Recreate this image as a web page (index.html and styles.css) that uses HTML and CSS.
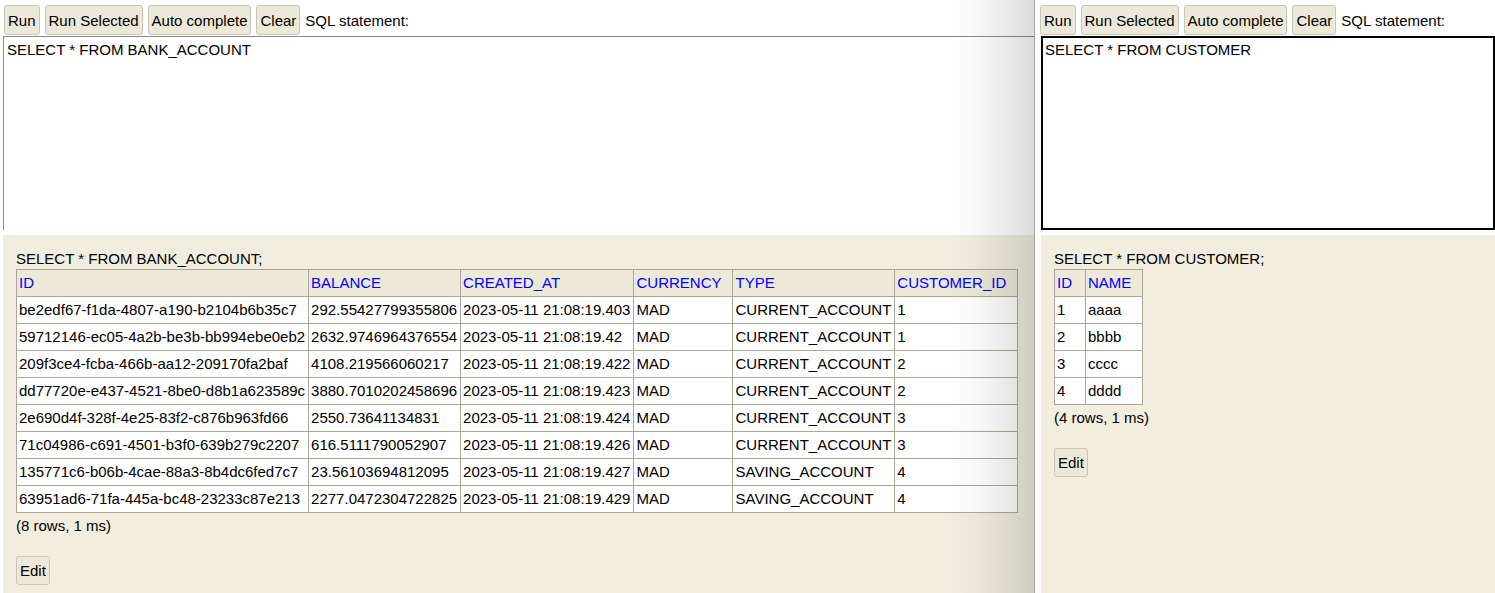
FILE: index.html
```html
<!DOCTYPE html>
<html>
<head>
<meta charset="utf-8">
<link rel="stylesheet" href="styles.css">
</head>
<body>
<div class="app">
  <div class="panel panel-left">
    <div class="toolbar">
      <button class="btn">Run</button>
      <button class="btn">Run Selected</button>
      <button class="btn">Auto complete</button>
      <button class="btn">Clear</button>
      <span class="label">SQL statement:</span>
    </div>
    <textarea class="sql sql-left">SELECT * FROM BANK_ACCOUNT</textarea>
    <div class="results">
      <div class="query">SELECT * FROM BANK_ACCOUNT;</div>
      <table class="result-set">
        <tr><th>ID</th><th>BALANCE</th><th>CREATED_AT</th><th>CURRENCY</th><th>TYPE</th><th>CUSTOMER_ID</th></tr>
        <tr><td>be2edf67-f1da-4807-a190-b2104b6b35c7</td><td>292.55427799355806</td><td>2023-05-11 21:08:19.403</td><td>MAD</td><td>CURRENT_ACCOUNT</td><td>1</td></tr>
        <tr><td>59712146-ec05-4a2b-be3b-bb994ebe0eb2</td><td>2632.9746964376554</td><td>2023-05-11 21:08:19.42</td><td>MAD</td><td>CURRENT_ACCOUNT</td><td>1</td></tr>
        <tr><td>209f3ce4-fcba-466b-aa12-209170fa2baf</td><td>4108.219566060217</td><td>2023-05-11 21:08:19.422</td><td>MAD</td><td>CURRENT_ACCOUNT</td><td>2</td></tr>
        <tr><td>dd77720e-e437-4521-8be0-d8b1a623589c</td><td>3880.7010202458696</td><td>2023-05-11 21:08:19.423</td><td>MAD</td><td>CURRENT_ACCOUNT</td><td>2</td></tr>
        <tr><td>2e690d4f-328f-4e25-83f2-c876b963fd66</td><td>2550.73641134831</td><td>2023-05-11 21:08:19.424</td><td>MAD</td><td>CURRENT_ACCOUNT</td><td>3</td></tr>
        <tr><td>71c04986-c691-4501-b3f0-639b279c2207</td><td>616.5111790052907</td><td>2023-05-11 21:08:19.426</td><td>MAD</td><td>CURRENT_ACCOUNT</td><td>3</td></tr>
        <tr><td>135771c6-b06b-4cae-88a3-8b4dc6fed7c7</td><td>23.56103694812095</td><td>2023-05-11 21:08:19.427</td><td>MAD</td><td>SAVING_ACCOUNT</td><td>4</td></tr>
        <tr><td>63951ad6-71fa-445a-bc48-23233c87e213</td><td>2277.0472304722825</td><td>2023-05-11 21:08:19.429</td><td>MAD</td><td>SAVING_ACCOUNT</td><td>4</td></tr>
      </table>
      <div class="summary">(8 rows, 1 ms)</div>
      <button class="btn btn-edit">Edit</button>
    </div>
    <div class="shade"></div>
  </div>
  <div class="divider"></div>
  <div class="panel panel-right">
    <div class="toolbar">
      <button class="btn">Run</button>
      <button class="btn">Run Selected</button>
      <button class="btn">Auto complete</button>
      <button class="btn">Clear</button>
      <span class="label">SQL statement:</span>
    </div>
    <textarea class="sql sql-right">SELECT * FROM CUSTOMER</textarea>
    <div class="results">
      <div class="query">SELECT * FROM CUSTOMER;</div>
      <table class="result-set">
        <tr><th class="col-id">ID</th><th>NAME</th></tr>
        <tr><td>1</td><td>aaaa</td></tr>
        <tr><td>2</td><td>bbbb</td></tr>
        <tr><td>3</td><td>cccc</td></tr>
        <tr><td>4</td><td>dddd</td></tr>
      </table>
      <div class="summary">(4 rows, 1 ms)</div>
      <button class="btn btn-edit">Edit</button>
    </div>
  </div>
</div>
</body>
</html>
```

FILE: styles.css
```css
* {
  box-sizing: border-box;
}

html, body {
  margin: 0;
  padding: 0;
  background: #ffffff;
}

body {
  font-family: "Liberation Sans", Arial, sans-serif;
  font-size: 15px;
  line-height: 17px;
  color: #000000;
}

.app {
  display: flex;
  height: 593px;
  overflow: hidden;
}

.panel {
  display: flex;
  flex-direction: column;
  overflow: hidden;
  background: #ffffff;
}

.panel-left {
  position: relative;
  width: 1035px;
  flex: 0 0 1035px;
  padding-left: 3px;
  border-right: 1px solid #a3a3a3;
}

.divider {
  flex: 0 0 3px;
  background: #ffffff;
}

.panel-right {
  flex: 1 1 auto;
  padding-left: 3px;
}

.toolbar {
  display: flex;
  align-items: center;
  gap: 5px;
  height: 36px;
  padding-top: 5px;
  padding-bottom: 1px;
  padding-left: 1px;
  white-space: nowrap;
}

.panel-right .toolbar {
  padding-left: 0;
  margin-left: -1px;
}

.btn {
  font-family: "Liberation Sans", Arial, sans-serif;
  font-size: 15px;
  line-height: 17px;
  height: 30px;
  padding: 0 3px;
  margin: 0;
  color: #000000;
  background: #ece9d8;
  border: 1px solid #c9c6b8;
  border-radius: 3px;
}

.sql {
  display: block;
  font-family: "Liberation Sans", Arial, sans-serif;
  font-size: 15px;
  line-height: 17px;
  color: #000000;
  resize: none;
  outline: none;
  background: #ffffff;
  height: 194px;
  flex: 0 0 194px;
  margin: 0;
}

.sql-left {
  width: 1100px;
  padding: 4px 0 0 3px;
  border: none;
  border-top: 1px solid #8a8a8a;
  border-left: 1px solid #8a8a8a;
}

.sql-right {
  width: 100%;
  padding: 3px 0 0 2px;
  border: 2px solid #000000;
}

.results {
  margin-top: 5px;
  flex: 1 1 auto;
  background: #f1eee0;
  padding: 15px 13px 0 13px;
}

.query {
  margin-bottom: 2px;
}

.result-set {
  border-collapse: collapse;
}

.result-set th,
.result-set td {
  border: 1px solid #aca899;
  padding: 4px 3px 5px 2px;
  text-align: left;
  white-space: nowrap;
  font-weight: normal;
}

.result-set th {
  background: #ece9d8;
  color: #0000ff;
  padding-right: 11px;
}

.result-set th.col-id {
  padding-right: 13px;
}

.result-set td {
  background: #ffffff;
}

.summary {
  margin-top: 4px;
}

.btn-edit {
  margin-top: 22px;
  height: 29px;
}

.shade {
  position: absolute;
  top: 0;
  right: 0;
  bottom: 0;
  width: 90px;
  pointer-events: none;
  background: linear-gradient(to right, rgba(0, 0, 0, 0) 0%, rgba(0, 0, 0, 0.03) 40%, rgba(0, 0, 0, 0.1) 80%, rgba(0, 0, 0, 0.14) 100%);
}
```
